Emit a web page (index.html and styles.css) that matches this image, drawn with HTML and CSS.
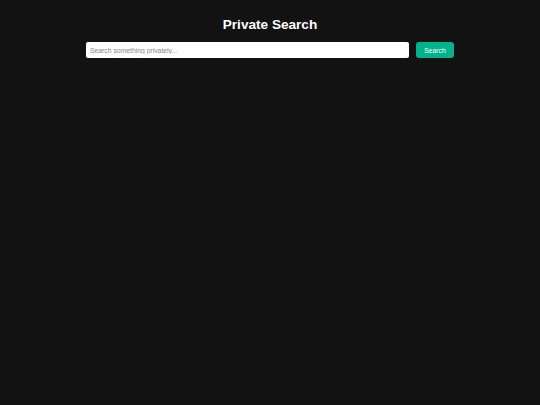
FILE: index.html
```html
<!DOCTYPE html>
<html>
<head>
<meta charset="utf-8">
<link rel="stylesheet" href="styles.css">
</head>
<body>
<div class="page">
  <h1 class="title">Private Search</h1>
  <form class="search">
    <input class="search-input" type="text" placeholder="Search something privately...">
    <button class="search-btn" type="button">Search</button>
  </form>
</div>
</body>
</html>
```
FILE: styles.css
```css
html, body {
  margin: 0;
  padding: 0;
  background: #121212;
  height: 100%;
}
.page {
  font-family: "Liberation Sans", Arial, sans-serif;
  color: #fff;
  display: flex;
  flex-direction: column;
  align-items: center;
  padding-top: 16px;
}
.title {
  margin: 0;
  font-size: 13.6px;
  font-weight: bold;
  line-height: 18px;
}
.search {
  display: flex;
  gap: 7px;
  width: 368px;
  margin-top: 8px;
}
.search-input {
  flex: 1;
  height: 16px;
  box-sizing: border-box;
  border: none;
  border-radius: 2px;
  padding: 0 4px;
  font-family: "Liberation Sans", Arial, sans-serif;
  font-size: 6.8px;
  background: #fff;
  color: #222;
  outline: none;
}
.search-input::placeholder {
  color: #888;
}
.search-btn {
  width: 38px;
  height: 16px;
  border: none;
  border-radius: 3px;
  background: #00b38c;
  color: #fff;
  font-family: "Liberation Sans", Arial, sans-serif;
  font-size: 6.8px;
  padding: 0;
}
```
